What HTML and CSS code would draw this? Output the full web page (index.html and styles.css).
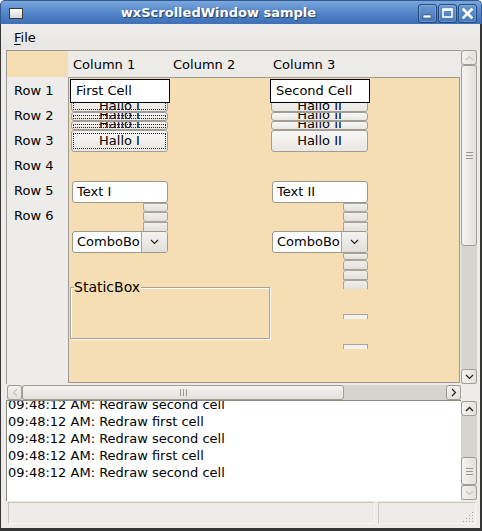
FILE: index.html
```html
<!DOCTYPE html>
<html>
<head>
<meta charset="utf-8">
<link rel="stylesheet" href="styles.css">
</head>
<body>
<div class="window">
  <div class="titlebar">
    <div class="appicon"></div>
    <div class="title">wxScrolledWindow sample</div>
    <div class="tbtns">
      <div class="tbtn"><svg width="19" height="19" viewBox="0 0 19 19"><rect x="5" y="11" width="8" height="3" fill="#fff" stroke="#23446f" stroke-width="0.6"/></svg></div>
      <div class="tbtn"><svg width="19" height="19" viewBox="0 0 19 19"><rect x="5" y="5" width="9" height="8" fill="none" stroke="#fff" stroke-width="1.6"/><rect x="5" y="5" width="9" height="2" fill="#fff"/></svg></div>
      <div class="tbtn"><svg width="19" height="19" viewBox="0 0 19 19"><path d="M5.5 5.5 L13.5 13.5 M13.5 5.5 L5.5 13.5" stroke="#fff" stroke-width="2.6" stroke-linecap="square"/></svg></div>
    </div>
  </div>
  <div class="frame">
    <div class="menubar"><span class="menuitem"><u>F</u>ile</span></div>

    <div class="topsec">
      <div class="sw">
        <div class="hdrrow">
          <div class="corner"></div>
          <div class="colhdr">
            <div class="colcell">Column 1</div>
            <div class="colcell">Column 2</div>
            <div class="colcell">Column 3</div>
          </div>
        </div>
        <div class="bodyrow">
          <div class="rowlabels">
            <div class="rowlabel">Row 1</div>
            <div class="rowlabel">Row 2</div>
            <div class="rowlabel">Row 3</div>
            <div class="rowlabel">Row 4</div>
            <div class="rowlabel">Row 5</div>
            <div class="rowlabel">Row 6</div>
          </div>
          <div class="canvas">
            <!-- column 1 -->
            <div class="btn focus strip s0 c1"><span>Hallo I</span></div>
            <div class="btn focus strip s1 c1"><span>Hallo I</span></div>
            <div class="btn focus strip s2 c1"><span>Hallo I</span></div>
            <div class="btn focus full c1"><span>Hallo I</span></div>
            <div class="cell cell1">First Cell</div>

            <div class="frag f0 fc1"></div>
            <div class="frag f1 fc1"></div>
            <div class="frag f2 fc1"></div>
            <div class="text t1">Text I</div>
            <div class="combo k1"><span class="ctext">ComboBo</span><span class="cbtn"><svg width="9" height="6" viewBox="0 0 9 6"><path d="M1 1 L4.5 4.5 L8 1" fill="none" stroke="#222" stroke-width="1.2"/></svg></span></div>

            <!-- column 3 -->
            <div class="btn strip s0 c3"><span>Hallo II</span></div>
            <div class="btn strip s1 c3"><span>Hallo II</span></div>
            <div class="btn strip s2 c3"><span>Hallo II</span></div>
            <div class="btn full c3"><span>Hallo II</span></div>
            <div class="cell cell2">Second Cell</div>

            <div class="frag f0 fc3"></div>
            <div class="frag f1 fc3"></div>
            <div class="frag f2 fc3"></div>
            <div class="text t3">Text II</div>
            <div class="combo k3"><span class="ctext">ComboBo</span><span class="cbtn"><svg width="9" height="6" viewBox="0 0 9 6"><path d="M1 1 L4.5 4.5 L8 1" fill="none" stroke="#222" stroke-width="1.2"/></svg></span></div>
            <div class="frag g0"></div>
            <div class="frag g1"></div>
            <div class="frag g2"></div>
            <div class="frag g3 open"></div>
            <div class="frag g4 line"></div>
            <div class="frag g5 line"></div>

            <div class="staticbox"><span class="sblabel">StaticBox</span></div>
          </div>
        </div>
      </div>
      <div class="vbar main">
        <div class="sbtn"><svg width="9" height="6" viewBox="0 0 9 6"><path d="M1 5 L4.5 1.5 L8 5" fill="none" stroke="#c8c4bd" stroke-width="1.2"/></svg></div>
        <div class="thumb v" style="height:181px"><div class="grip-h"></div></div>
        <div class="track"></div>
        <div class="sbtn"><svg width="9" height="6" viewBox="0 0 9 6"><path d="M1 1 L4.5 4.5 L8 1" fill="none" stroke="#222" stroke-width="1.2"/></svg></div>
      </div>
      <div class="hbar">
        <div class="sbtn"><svg width="6" height="9" viewBox="0 0 6 9"><path d="M5 1 L1.5 4.5 L5 8" fill="none" stroke="#c8c4bd" stroke-width="1.2"/></svg></div>
        <div class="thumb h" style="width:322px"><div class="grip-v"></div></div>
        <div class="track"></div>
        <div class="sbtn"><svg width="6" height="9" viewBox="0 0 6 9"><path d="M1 1 L4.5 4.5 L1 8" fill="none" stroke="#222" stroke-width="1.2"/></svg></div>
      </div>
    </div>

    <div class="logsec">
      <div class="log">
        <div class="loglines">
          <div>09:48:12 AM: Redraw second cell</div>
          <div>09:48:12 AM: Redraw first cell</div>
          <div>09:48:12 AM: Redraw second cell</div>
          <div>09:48:12 AM: Redraw first cell</div>
          <div>09:48:12 AM: Redraw second cell</div>
        </div>
      </div>
      <div class="vbar logbar">
        <div class="sbtn"><svg width="9" height="6" viewBox="0 0 9 6"><path d="M1 5 L4.5 1.5 L8 5" fill="none" stroke="#222" stroke-width="1.4"/></svg></div>
        <div class="track"></div>
        <div class="thumb v" style="height:28px"><div class="grip-h"></div></div>
        <div class="sbtn"><svg width="9" height="6" viewBox="0 0 9 6"><path d="M1 1 L4.5 4.5 L8 1" fill="none" stroke="#c8c4bd" stroke-width="1.2"/></svg></div>
      </div>
    </div>

    <div class="statusbar">
      <div class="field f-main"></div>
      <div class="field f-side">
        <svg class="rgrip" width="12" height="12" viewBox="0 0 12 12">
          <g fill="#a9a49b">
            <rect x="10" y="1" width="1" height="1"/>
            <rect x="7" y="4" width="1" height="1"/><rect x="10" y="4" width="1" height="1"/>
            <rect x="4" y="7" width="1" height="1"/><rect x="7" y="7" width="1" height="1"/><rect x="10" y="7" width="1" height="1"/>
            <rect x="1" y="10" width="1" height="1"/><rect x="4" y="10" width="1" height="1"/><rect x="7" y="10" width="1" height="1"/><rect x="10" y="10" width="1" height="1"/>
          </g>
        </svg>
      </div>
    </div>
  </div>
</div>
</body>
</html>
```
FILE: styles.css
```css
html, body {
  margin: 0;
  padding: 0;
  background: #ffffff;
}
body {
  font-family: "DejaVu Sans", "Liberation Sans", sans-serif;
  font-size: 13px;
  color: #000;
}
.window {
  width: 482px;
  height: 531px;
  display: flex;
  flex-direction: column;
  overflow: hidden;
}

/* title bar */
.titlebar {
  height: 24px;
  box-sizing: border-box;
  display: flex;
  align-items: center;
  padding: 0 4px 0 8px;
  background: linear-gradient(#7da6dc 0%, #5b8ccd 40%, #4a7cc1 70%, #3f70b5 100%);
  border: 1px solid #2f5b94;
  border-bottom: none;
  border-radius: 5px 5px 0 0;
}
.appicon {
  width: 12px;
  height: 9px;
  border: 1px solid #3b3b3b;
  background: linear-gradient(#ffffff, #d5d3cf);
  margin-top: 1px;
}
.title {
  flex: 1;
  text-align: center;
  color: #fff;
  font-weight: bold;
  font-size: 13px;
  text-shadow: 1px 1px 1px #233f66;
  margin-right: 4px;
}
.tbtns {
  display: flex;
  gap: 1px;
  margin-top: 1px;
}
.tbtn {
  width: 19px;
  height: 19px;
  box-sizing: border-box;
  border: 1px solid #244a7c;
  border-radius: 3px;
  background: linear-gradient(#6a98d3, #4676bb);
  box-shadow: inset 0 0 0 1px rgba(255,255,255,0.18);
  display: flex;
  align-items: center;
  justify-content: center;
}
.tbtn svg { display: block; margin: -1px; }

/* frame */
.frame {
  flex: 1;
  display: flex;
  flex-direction: column;
  background: #edeceb;
  border-left: 1px solid #353535;
  border-right: 2px solid #353535;
  border-bottom: 3px solid #353535;
}
.menubar {
  height: 26px;
  display: flex;
  align-items: center;
  padding-left: 7px;
  background: linear-gradient(#efeeed, #e8e6e3);
  box-sizing: border-box;
}
.menuitem {
  padding: 0 6px;
  margin-top: 1px;
}
.menuitem u { text-decoration-thickness: 1px; text-underline-offset: 2px; }

/* top section */
.topsec {
  display: grid;
  grid-template-columns: 455px 16px;
  grid-template-rows: 334px 16px;
  margin-left: 5px;
}
.sw {
  border-top: 1px solid #9d9891;
  border-left: 1px solid #9d9891;
  display: flex;
  flex-direction: column;
  overflow: hidden;
}
.hdrrow {
  display: flex;
  height: 26px;
}
.corner {
  width: 61px;
  background: #f5deb3;
}
.colhdr {
  flex: 1;
  display: flex;
  align-items: center;
  padding-left: 5px;
  background: #edebe8;
}
.colcell {
  width: 100px;
}
.bodyrow {
  display: flex;
  flex: 1;
}
.rowlabels {
  width: 61px;
  padding-top: 1px;
}
.rowlabel {
  height: 25px;
  line-height: 25px;
  padding-left: 7px;
}
.canvas {
  position: relative;
  width: 390px;
  height: 304px;
  background: #f5deb3;
  border: 1px solid #9d9891;
  overflow: hidden;
}

/* widgets on the canvas (origin x=69 y=78) */
.cell {
  position: absolute;
  top: 1px;
  width: 100px;
  height: 24px;
  box-sizing: border-box;
  border: 1px solid #000;
  background: #fff;
  line-height: 22px;
  padding-left: 5px;
}
.cell1 { left: 1px; }
.cell2 { left: 201px; }

.btn {
  position: absolute;
  box-sizing: border-box;
  width: 97px;
  border: 1px solid #a29d94;
  border-radius: 3px;
  background: linear-gradient(#f8f7f6, #e9e7e3);
  overflow: hidden;
  text-align: center;
}
.c1 { left: 2px; }
.c3 { left: 202px; }
.btn.full {
  top: 52px;
  height: 22px;
  line-height: 19px;
}
.btn.strip {
  display: flex;
  align-items: flex-end;
  justify-content: center;
}
.btn.strip span {
  display: block;
  line-height: 13px;
  margin-bottom: -1px;
}
.s0 { top: 17px; height: 17px; }
.s1 { top: 34px; height: 9px; }
.s2 { top: 43px; height: 9px; }
.btn.focus::after {
  content: "";
  position: absolute;
  left: 1px;
  right: 1px;
  top: 2px;
  bottom: 1px;
  border: 1px dotted #222;
}
.btn.full.focus::after { left: 1px; right: 1px; top: 2px; bottom: 2px; }

.text {
  position: absolute;
  top: 103px;
  width: 96px;
  height: 22px;
  box-sizing: border-box;
  border: 1px solid #9e998f;
  border-radius: 3px;
  background: #fff;
  line-height: 20px;
  padding-left: 4px;
}
.t1 { left: 3px; }
.t3 { left: 203px; }

.combo {
  position: absolute;
  top: 153px;
  width: 96px;
  height: 22px;
  box-sizing: border-box;
  border: 1px solid #9e998f;
  border-radius: 3px;
  background: #fff;
  display: flex;
  overflow: hidden;
}
.k1 { left: 3px; }
.k3 { left: 203px; }
.ctext {
  flex: 1;
  line-height: 20px;
  padding-left: 4px;
  overflow: hidden;
  white-space: nowrap;
}
.cbtn {
  width: 25px;
  border-left: 1px solid #a9a49b;
  background: linear-gradient(#f4f3f1, #e2dfda);
  display: flex;
  align-items: center;
  justify-content: center;
}

.frag {
  position: absolute;
  width: 25px;
  box-sizing: border-box;
  border: 1px solid #a9a49b;
  border-radius: 0 0 3px 3px;
  background: linear-gradient(#f1efec, #e4e1dc);
}
.fc1 { left: 74px; }
.fc3 { left: 274px; }
.f0 { top: 125px; height: 9px; }
.f1 { top: 134px; height: 10px; }
.f2 { top: 144px; height: 9px; border-radius: 0; border-bottom: none; }
.g0, .g1, .g2, .g3, .g4, .g5 { left: 274px; }
.g0 { top: 175px; height: 7px; }
.g1 { top: 182px; height: 10px; border-radius: 3px 3px 0 0; }
.g2 { top: 192px; height: 10px; border-radius: 3px 3px 0 0; }
.g3 { top: 202px; height: 9px; border-radius: 3px 3px 0 0; border-bottom: none; }
.frag.line {
  height: 5px;
  border-radius: 0;
  border-bottom: none;
  background: #f3f1ee;
}
.g4 { top: 236px; }
.g5 { top: 266px; }

.staticbox {
  position: absolute;
  left: 1px;
  top: 209px;
  width: 200px;
  height: 52px;
  box-sizing: border-box;
  border: 1px solid #a9a49b;
  box-shadow: inset 1px 1px 0 #fff, 1px 1px 0 #fff;
}
.sblabel {
  position: absolute;
  left: 3px;
  top: -9px;
  font-size: 14px;
  line-height: 16px;
  background: #f5deb3;
  padding-right: 1px;
}

/* scrollbars */
.vbar {
  display: flex;
  flex-direction: column;
  background: #d7d3cd;
}
.vbar .sbtn, .hbar .sbtn {
  box-sizing: border-box;
  border: 1px solid #a29d94;
  border-radius: 3px;
  background: linear-gradient(90deg, #f3f2f0, #e4e1dc);
  display: flex;
  align-items: center;
  justify-content: center;
}
.vbar .sbtn { height: 15px; }
.hbar .sbtn { width: 15px; background: linear-gradient(#f3f2f0, #e4e1dc); }
.track { flex: 1; }
.thumb {
  box-sizing: border-box;
  border: 1px solid #a29d94;
  border-radius: 3px;
  display: flex;
  align-items: center;
  justify-content: center;
}
.thumb.v { background: linear-gradient(90deg, #f4f3f1, #e3e0db); }
.thumb.h { background: linear-gradient(#f4f3f1, #e3e0db); }
.grip-h {
  width: 7px;
  height: 5px;
  border-top: 1px solid #9c978e;
  border-bottom: 1px solid #9c978e;
  position: relative;
}
.grip-h::after {
  content: "";
  position: absolute;
  left: 0; right: 0; top: 2px;
  border-top: 1px solid #9c978e;
}
.grip-v {
  width: 5px;
  height: 7px;
  border-left: 1px solid #9c978e;
  border-right: 1px solid #9c978e;
  position: relative;
}
.grip-v::after {
  content: "";
  position: absolute;
  top: 0; bottom: 0; left: 2px;
  border-left: 1px solid #9c978e;
}
.vbar.main {
  grid-column: 2;
  grid-row: 1;
}
.hbar {
  grid-column: 1;
  grid-row: 2;
  display: flex;
  margin-left: 1px;
  background: #d7d3cd;
  height: 15px;
  align-self: end;
}

/* log */
.logsec {
  display: grid;
  grid-template-columns: 455px 16px;
  height: 101px;
  margin-left: 5px;
}
.log {
  background: #fff;
  border-top: 1px solid #8e8a84;
  border-left: 1px solid #8e8a84;
  overflow: hidden;
}
.loglines {
  margin-top: -5px;
  padding-left: 1px;
  line-height: 17px;
  white-space: nowrap;
}
.vbar.logbar {
  margin-top: 1px;
  height: 99px;
}

/* status bar */
.statusbar {
  flex: 1;
  display: flex;
  gap: 3px;
  padding: 1px 0 0 7px;
}
.field {
  height: 22px;
  box-sizing: border-box;
  border: 1px solid #c9c5be;
  border-right-color: #f7f6f5;
  border-bottom-color: #f7f6f5;
  position: relative;
}
.f-main { width: 367px; }
.f-side { width: 98px; }
.rgrip {
  position: absolute;
  right: 1px;
  bottom: 0px;
}
```
